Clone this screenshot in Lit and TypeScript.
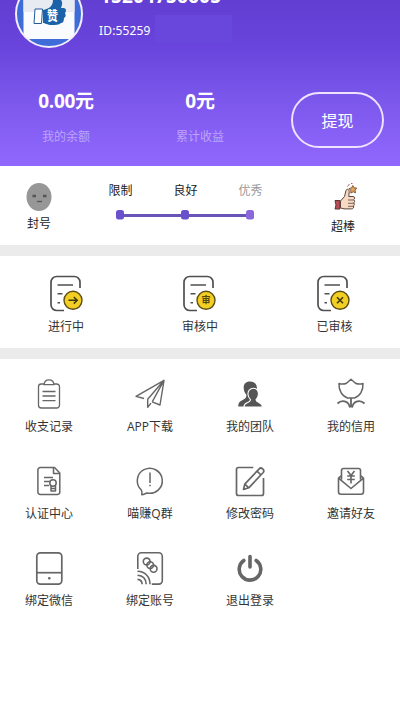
import { LitElement, html, css, svg } from "lit";
import { customElement } from "lit/decorators.js";

const orderMarks = {
  arrow: svg`<path d="M19.5 25.3h8.5M24.8 22l3.4 3.3-3.4 3.3" fill="none" stroke="#40380c" stroke-width="1.5"/>`,
  review: svg`<text x="24" y="28.4" text-anchor="middle" class="mark">审</text>`,
  cross: svg`<path d="M21 22.3l6 6M27 22.3l-6 6" fill="none" stroke="#40380c" stroke-width="1.6"/>`,
};

const icons = {
  clipboard: svg`<g stroke-width="1.3"><path d="M12 8H9.3a2.8 2.8 0 0 0-2.8 2.8v18.4A2.8 2.8 0 0 0 9.3 32h15.4a2.8 2.8 0 0 0 2.8-2.8V10.8A2.8 2.8 0 0 0 24.7 8H22M12 8.7h10C21.7 5.5 20 3.8 17 3.8s-4.700 1.700-5 4.900z"/><path d="M10.500 15.500h13M10.500 20h13M10.500 24.700h13"/></g>`,
  plane: svg`<path stroke-width="1.4" d="M12 22.500L4 20.300 32 4.300 28 29l-7.800-3.200M32 4.300L15.700 23.300v8l3.300-4.200M32 4.300L20.200 25.800"/>`,
  team: svg`<g fill="#555" stroke="none"><path d="M18 5.500c-4.800 0-6.800 3-6.200 7.500.3 2.800 1.500 4.500 2.700 6-.2 3.200-1.500 4-4.300 5.200C7.500 25.400 6.200 27 6.200 30.500H20l5-16c.5-6-2.200-9-7-9z"/><path stroke="#fff" stroke-width="1.1" d="M21.500 12.300c-3.700 0-5.800 2.700-5.500 6.200.2 2.200 1.300 4 2.600 5.300-.2 1.800-1.300 2.200-3.400 3-2.200.9-3.300 2-3.300 4.300h18.500c0-2.500-1-3.500-3.200-4.400-2.100-.8-3.100-1.200-3.300-2.900 1.300-1.300 2.300-3.100 2.500-5.300.3-3.500-1.500-6.200-4.900-6.200z"/></g>`,
  tulip: svg`<g stroke-width="1.500"><path d="M7 7.500c2.500.8 4.700 1 7.500-.2L19 3.300l4.500 4c2.800 1.200 5 1 7.500.2.300 7-3 12.800-8.500 14.500h-7C10 20.300 6.700 14.500 7 7.500z"/><path stroke-width="1.800" d="M19 22v9.500M5.500 27.500c4-4 11-3.200 12.500 4M32.500 27.500c-4-4-11-3.200-12.500 4"/></g>`,
  certificate: svg`<g stroke-width="1.500"><path d="M22.500 4.500H8.200A2.300 2.300 0 0 0 5.900 6.800v22.400a2.300 2.300 0 0 0 2.300 2.300h17.300a2.300 2.300 0 0 0 2.300-2.300V10z"/><path d="M21.500 5v5.500h6M12 14.500h9M12 18.500h6M12 22.500h5"/><circle cx="21" cy="20" r="3.200"/><path d="M19 23v5h4.500v-5M19 25.500h4.500"/></g>`,
  bubble: svg`<g stroke-width="1.500"><path d="M9.300 27A12.500 12.500 0 1 1 15 30c-1.800.5-3 1.500-5.200 1.700.5-1.600.4-3-.5-4.700z"/><path d="M18 9.500v10.500M18 21.700v1.600"/></g>`,
  edit: svg`<g stroke-width="1.700"><path d="M21.300 4.500H6.500A2 2 0 0 0 4.500 6.500v24a2 2 0 0 0 2 2h23a2 2 0 0 0 2-2V15"/><path d="M11.500 26.500l1.300-5.300L27.200 5.800c2-2.200 6 1.200 4 3.700L16.800 24.800zM25 8.200l4 3.800M12.800 21.200l4 3.600"/></g>`,
  invite: svg`<g stroke-width="1.600"><path d="M9.500 16.500v-9a2 2 0 0 1 2-2h15a2 2 0 0 1 2 2v9M9.500 12.500l-3 2.700v13.600a2.500 2.500 0 0 0 2.500 2.500h20a2.500 2.500 0 0 0 2.500-2.500V15.200l-3-2.700M6.500 15.200L19 25.500l12.500-10.300"/><path d="M15.500 8l3.500 4.500L22.500 8M19 12.500v8M15.200 13h7.600M15.200 16.500h7.600"/></g>`,
  phone: svg`<g stroke-width="1.700"><rect x="4.800" y="2.800" width="25" height="31.300" rx="3.500"/><path d="M5 22.700h25"/><circle cx="17.300" cy="28.300" r="1.300" fill="#666" stroke="none"/></g>`,
  card: svg`<g stroke-width="1.600"><path d="M5.800 19V6.300a3.500 3.500 0 0 1 3.500-3.500h17.500a3.500 3.500 0 0 1 3.500 3.500v24.300a3.500 3.500 0 0 1-3.500 3.500h-7"/><path d="M5.500 21.300c7.500.3 12.500 5.200 12.500 12.900M5.500 25.200c5.200.3 8.500 3.500 8.700 9M5.500 29.400c2.900.2 4.500 1.800 4.600 4.800"/><circle cx="14.700" cy="11.500" r="3.400"/><circle cx="18.200" cy="15.100" r="3.400"/><circle cx="21.600" cy="18.800" r="3.400"/></g>`,
  power: svg`<path stroke-width="3.600" stroke-linecap="round" d="M11.800 10.500a10.800 10.800 0 1 0 12.400 0M18 6.500v10.500"/>`,
};

@customElement("app-root")
export class AppRoot extends LitElement {
  static styles = css`
    :host {
      display: block;
      height: 710px;
      overflow: hidden;
      background: #fff;
      color: #333;
      font: 12px/16px "Open Sans", "Noto Sans CJK SC", sans-serif;
      white-space: nowrap;
    }
    svg { display: block; flex: none; }
    .header {
      height: 166px;
      overflow: hidden;
      background: linear-gradient(#623ed2, #6844dc 27%, #7c57ec 60%, #9168fe);
      color: #fff;
    }
    .profile { display: flex; height: 82px; padding-left: 14px; gap: 15px; }
    .avatar { margin-top: -21px; }
    .avatar text { font: 700 13px "Noto Sans CJK SC", sans-serif; fill: #fff; }
    .name { margin: -15px 0 0 1px; font: 700 19px/22px "Open Sans", sans-serif; letter-spacing: 0.15px; }
    .idline { display: flex; padding-top: 1px; }
    .uid { margin-top: 15px; width: 56px; font: 12px/16px "Noto Sans", sans-serif; letter-spacing: 0.15px; }
    .patch { margin: 7px 0 0; width: 77px; height: 28px; background: #6946dc; }
    .wallet { display: flex; align-items: flex-start; }
    .sum { width: 134px; text-align: center; }
    .sum:first-child { width: 132px; margin-right: 1px; }
    .amount { font: 700 19px/22px "Open Sans", "Noto Sans CJK SC", sans-serif; padding-top: 8px; letter-spacing: -0.3px; }
    .caption { padding-top: 17px; color: #bda4fa; }
    .withdraw {
      box-sizing: border-box;
      width: 93px;
      height: 56px;
      margin: 10px 0 0 24px;
      padding: 0;
      border: 2px solid #eee2ff;
      border-radius: 28px;
      background: none;
      color: #fff;
      font: 16px/52px "Noto Sans CJK SC", sans-serif;
    }
    .credit { display: flex; height: 79px; border-bottom: 11px solid #ebebeb; color: #222; }
    .level { display: flex; flex-direction: column; align-items: center; }
    .bad { width: 78px; padding-top: 16px; gap: 4px; }
    .scale { width: 195px; padding-top: 17px; margin-left: 9px; }
    .steps { display: grid; grid-template-columns: repeat(3, 65px); margin: 0 -1px 0 1px; text-align: center; }
    .faded { color: #999; }
    .track { margin-top: 10px; }
    .top { width: 88px; margin-left: 19px; padding-top: 16px; gap: 5px; }
    .top span { margin-right: 4px; }
    .orders { display: grid; grid-template-columns: 133px 134px 133px; height: 92px; border-bottom: 11px solid #ebebeb; }
    .order, .item { display: flex; flex-direction: column; align-items: center; }
    .order { padding-top: 19px; gap: 6px; }
    .order:first-child span { margin-right: 1px; }
    .order:last-child span { margin-left: 2px; }
    .mark { font: 700 9px "Noto Sans CJK SC", sans-serif; fill: #514510; }
    .menu { display: grid; grid-template-columns: repeat(4, 1fr); grid-auto-rows: 87px; }
    .item { padding-top: 17px; gap: 7px; box-sizing: border-box; }
    .item:nth-child(4n + 1) span { margin-right: 2px; }
    .item:nth-child(4n) span { margin-left: 2px; }
  `;

  order(label: string, mark: unknown) {
    return html`<div class="order">
      <svg width="36" height="38" viewBox="0 0 36 38">
        <path d="M15 35.500H7.800A5.800 5.800 0 0 1 2 29.700V7.300a5.800 5.800 0 0 1 5.800-5.800h17.400A5.800 5.800 0 0 1 31 7.300V13" fill="none" stroke="#505050" stroke-width="1.700" />
        <path d="M8.500 10h15.500M8.500 18.700h5M8.500 27.700h2.500" stroke="#505050" stroke-width="1.600" />
        <circle cx="24" cy="25.300" r="9" fill="#f2cf22" stroke="#5d4e18" stroke-width="1.400" />
        ${mark}
      </svg>
      <span>${label}</span>
    </div>`;
  }

  item(label: string, icon: unknown) {
    return html`<div class="item">
      <svg width="36" height="36" viewBox="0 0 36 36" fill="none" stroke="#666" stroke-linejoin="round">${icon}</svg>
      <span>${label}</span>
    </div>`;
  }

  render() {
    return html`
      <div class="header">
        <div class="profile">
          <svg class="avatar" width="70" height="70" viewBox="0 0 70 70">
            <defs><clipPath id="face"><circle cx="35" cy="35" r="33" /></clipPath></defs>
            <g clip-path="url(#face)">
              <path fill="#3e6dd8" d="M0 0h70v70H0z" />
              <path fill="#fafbff" d="M9.500 0h51v60h-51z" />
              <path fill="#e9ebf3" d="M9.500 21h51v12h-51z" />
              <path fill="#1c62a9" d="M29 31c6-1 10-4 10-10h8c2 3 1 5 0 8h3c3 1 2 4 1 5 1 2 1 4-1 5 0 3-1 5-3 5-2 2-6 2-9 2-5 0-7-2-9-2z" />
              <path fill="#fff" stroke="#235b96" d="M21 30h7.500l-1 14.500H20z" />
              <text x="33" y="41" textLength="11" lengthAdjust="spacingAndGlyphs">赞</text>
            </g>
            <circle cx="35" cy="35" r="33" fill="none" stroke="#f3edff" stroke-width="2" />
          </svg>
          <div>
            <div class="name">15204756605</div>
            <div class="idline"><div class="uid">ID:55259</div><div class="patch"></div></div>
          </div>
        </div>
        <div class="wallet">
          <div class="sum"><div class="amount">0.00元</div><div class="caption">我的余额</div></div>
          <div class="sum"><div class="amount">0元</div><div class="caption">累计收益</div></div>
          <button class="withdraw">提现</button>
        </div>
      </div>
      <div class="credit">
        <div class="level bad">
          <svg width="28" height="30" viewBox="0 0 28 30">
            <ellipse cx="14" cy="15" rx="12.500" ry="14" fill="#979797" />
            <path d="M7.500 14h3.500M18 14h3.500" stroke="#555" stroke-width="2.500" />
            <path d="M12 19.500h5" stroke="#555" stroke-width="1.300" />
          </svg>
          <span>封号</span>
        </div>
        <div class="scale">
          <div class="steps"><span>限制</span><span>良好</span><span class="faded">优秀</span></div>
          <svg class="track" width="195" height="12" viewBox="0 0 195 12">
            <path d="M33 6.500h130" stroke="#6a54b8" stroke-width="3" />
            <rect x="29" y="1" width="8" height="9.500" rx="2.500" fill="#6b50cd" />
            <rect x="94" y="1" width="8" height="9.500" rx="2.500" fill="#6b50cd" />
            <rect x="159" y="1" width="8" height="9.500" rx="2.500" fill="#8a68dc" />
          </svg>
        </div>
        <div class="level top">
          <svg width="28" height="32" viewBox="0 0 28 32" stroke-linejoin="round">
            <path d="M4 18.500h5v8.500H4l1-4z" fill="#b94c55" stroke="#5d3438" />
            <path d="M9.500 19l4-4.500 1.500-6c.5-2 3.300-1.500 3.200 1l-.4 5H22c2 0 2.200 2.500.7 3.200 1.300.8 1.200 2.500 0 3.200 1 .8.800 2.300-.3 3 .8 1.500 0 3-2 3H13l-3.500-1z" fill="#f8d9c3" stroke="#59473f" />
            <path d="M17 18h6M17 21.300h6M17 24.300h5" stroke="#59473f" stroke-width=".8" />
            <path d="M21.800 3.500l1.300 2.300 2.700.3-1.800 2 .6 2.700-2.500-1-2.300 1.300.1-2.700-2-1.800 2.700-.7z" fill="#e1a25c" stroke="#795031" stroke-width=".9" />
            <path d="M16.500 4.500l2-2.500M20 1.500h1.500" stroke="#bc5963" stroke-width="1" />
          </svg>
          <span>超棒</span>
        </div>
      </div>
      <div class="orders">
        ${this.order("进行中", orderMarks.arrow)}
        ${this.order("审核中", orderMarks.review)}
        ${this.order("已审核", orderMarks.cross)}
      </div>
      <div class="menu">
        ${this.item("收支记录", icons.clipboard)}
        ${this.item("APP下载", icons.plane)}
        ${this.item("我的团队", icons.team)}
        ${this.item("我的信用", icons.tulip)}
        ${this.item("认证中心", icons.certificate)}
        ${this.item("喵赚Q群", icons.bubble)}
        ${this.item("修改密码", icons.edit)}
        ${this.item("邀请好友", icons.invite)}
        ${this.item("绑定微信", icons.phone)}
        ${this.item("绑定账号", icons.card)}
        ${this.item("退出登录", icons.power)}
      </div>
    `;
  }
}
